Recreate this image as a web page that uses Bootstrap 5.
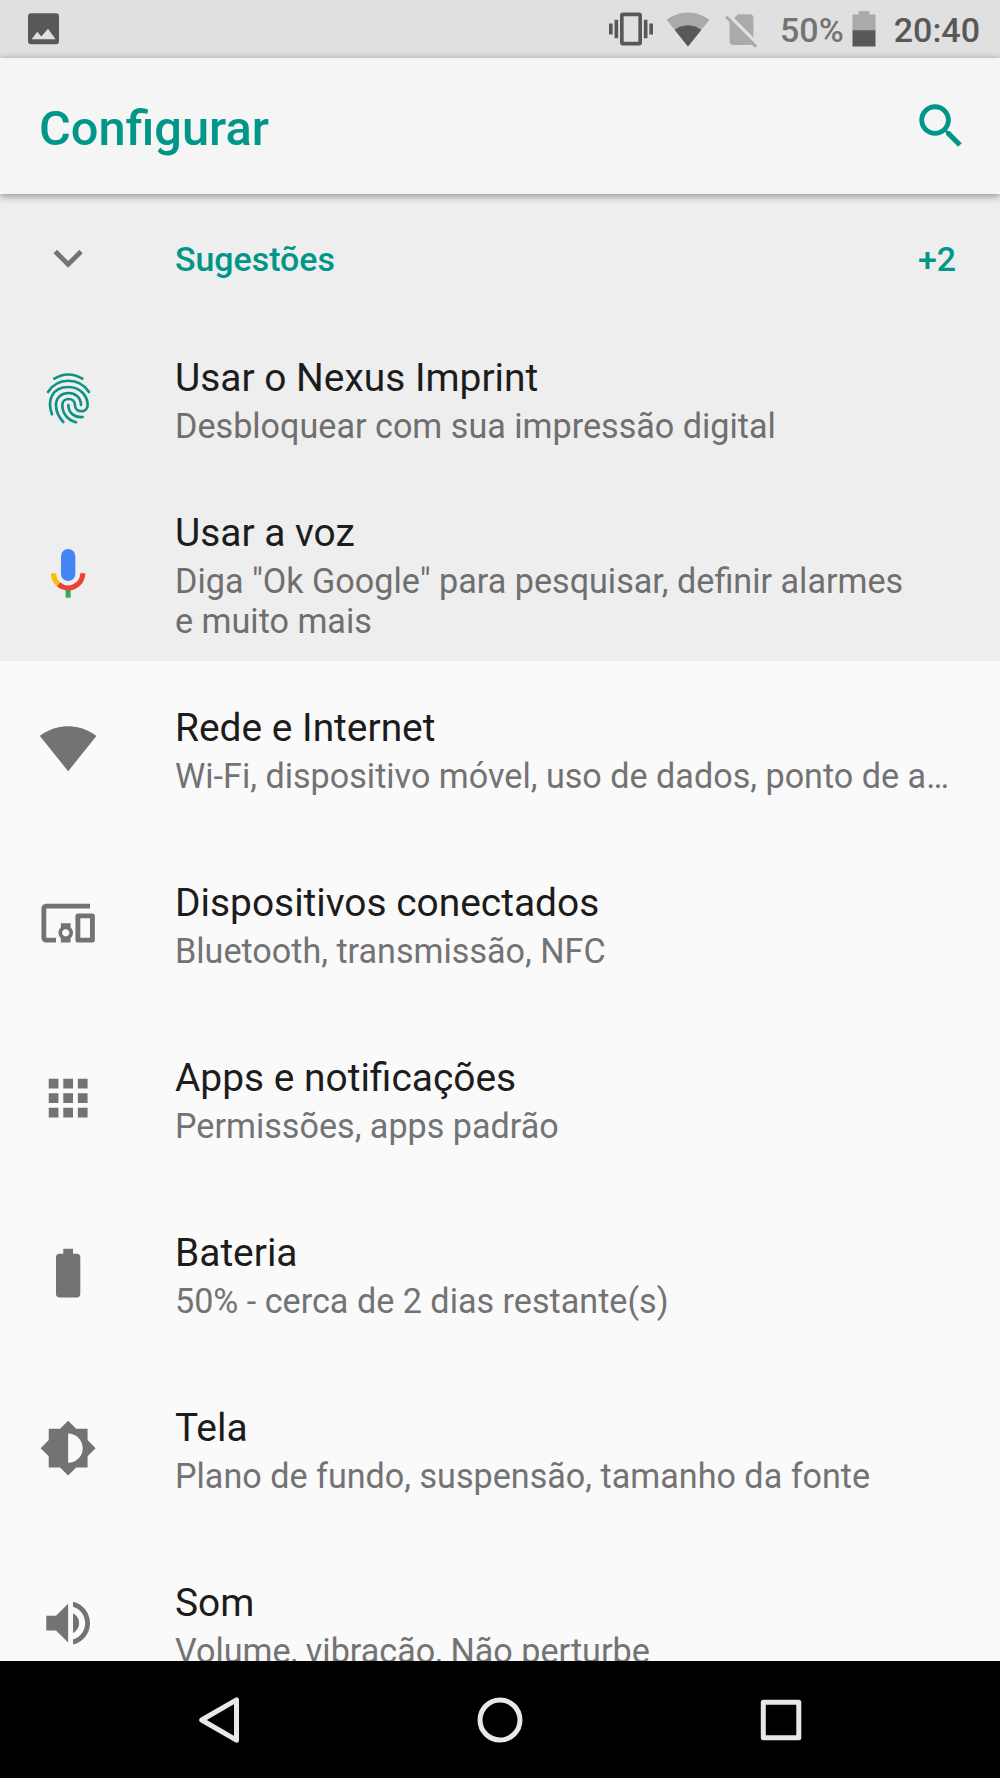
<!DOCTYPE html>
<html lang="pt-BR">
<head>
<meta charset="utf-8">
<meta name="viewport" content="width=device-width, initial-scale=1">
<title>Configurar</title>
<link rel="stylesheet" href="https://cdn.jsdelivr.net/npm/bootstrap@5.3.0/dist/css/bootstrap.min.css">
<style>
  :root { --teal: #009688; --ink: #1c1c1c; --dim: #737373; }
  body { font-family: Roboto, "Liberation Sans", sans-serif; background: #fafafa; color: var(--ink); }
  svg { display: block; flex: none; }
  .phone { width: 1000px; height: 1778px; }
  .statusbar { height: 58px; background: #e0e0e0; padding: 0 20px 0 28px; font-size: 34px; line-height: 40px; font-weight: 500; color: #585858; }
  .statusbar span { padding-top: 2px; }
  .statusbar .ico-vibrate { margin-right: 13px; }
  .statusbar .ico-sim { margin-left: 10.5px; }
  .statusbar .pct { color: #747474; margin: 0 8.5px 0 18.5px; }
  .statusbar .clock { margin-left: 17.5px; }
  .appbar { height: 136px; background: #f5f5f5; padding: 0 30px 0 39px; box-shadow: 0 2px 8px rgba(0,0,0,.42); z-index: 2; color: var(--teal); }
  .appbar h1 { font-size: 48.8px; line-height: 57px; font-weight: 500; padding-top: 4px; }
  .suggestions { background: #eee; padding-top: 11px; height: 467px; }
  .sug-head { height: 106px; font-size: 33.9px; line-height: 40px; font-weight: 500; color: var(--teal); padding: 0 44px 0 38.5px; }
  .sug-head span { padding-top: 3px; }
  .entry { height: 175px; padding: 0 44px 0 38.5px; }
  .glyph { width: 136.5px; color: var(--dim); flex: none; }
  .glyph svg { width: 58.3px; height: 58.3px; }
  .entry-title { font-size: 38.9px; line-height: 46px; padding: 5px 0 1px; }
  .entry-sub { font-size: 34.15px; line-height: 40px; padding: 4px 0 1px; color: var(--dim); }
  .suggestions .entry-sub { max-width: 740px; color: #6f6f6f; }
  .navkeys { height: 117px; background: #000; color: #e8e8e8; padding: 0 197px; }
</style>
<script src="https://cdn.jsdelivr.net/npm/bootstrap@5.3.0/dist/js/bootstrap.bundle.min.js"></script>
</head>
<body>
<div class="phone d-flex flex-column overflow-hidden">
  <div class="statusbar d-flex align-items-center flex-shrink-0">
    <svg width="31" height="32" viewBox="0 0 31 32"><rect y=".3" width="31" height="31" rx="3" fill="#585858"/><path d="M3.6 26.2l5.7-7.4 4 4.8L20 15.700l7.600 10.500z" fill="#e0e0e0"/></svg>
    <div class="d-flex align-items-center ms-auto">
      <svg class="ico-vibrate" width="44" height="44" viewBox="0 0 24 24" fill="currentColor"><path d="M0 15h2V9H0v6zm3 2h2V7H3v10zm19-8v6h2V9h-2zm-3 8h2V7h-2v10zM16.500 3h-9C6.670 3 6 3.670 6 4.500v15c0 .83.67 1.500 1.500 1.500h9c.83 0 1.500-.67 1.500-1.500v-15c0-.83-.67-1.500-1.500-1.500zM16 19H8V5h8v14z"/></svg>
      <svg width="44" height="44" viewBox="0 0 24 24"><path fill="#aaa" d="M12.010 21.490L23.640 7c-.45-.34-4.930-4-11.640-4C5.280 3 .81 6.660.36 7l11.630 14.490.01.01.01-.01z"/><path fill="#585858" d="M4.790 12.520l7.200 8.980H12l.01-.01 7.200-8.980C18.850 12.240 16.100 10 12 10s-6.850 2.240-7.210 2.520z"/></svg>
      <svg class="ico-sim" width="41" height="41" viewBox="0 0 24 24" fill="#aaa"><path d="M18.990 5c0-1.100-.89-2-1.990-2h-7L7.660 5.340 19 16.680 18.990 5zM3.650 3.880L2.380 5.150 5 7.770V19c0 1.100.9 2 2 2h10.010c.35 0 .67-.1.960-.26l1.880 1.880 1.270-1.270L3.650 3.880z"/></svg>
      <span class="pct">50%</span>
      <svg width="24" height="36" viewBox="0 0 24 36"><path fill="#aaa" d="M6.500 0h11v3.500H23.500V20H.5V3.500h6z"/><path fill="#585858" d="M.5 19.300h23V35.500H.5z"/></svg>
      <span class="clock">20:40</span>
    </div>
  </div>

  <header class="appbar d-flex align-items-center justify-content-between flex-shrink-0 position-relative">
    <h1 class="mb-0">Configurar</h1>
    <svg width="58.3" height="58.3" viewBox="0 0 24 24" fill="currentColor"><path d="M15.500 14h-.79l-.28-.27C15.410 12.590 16 11.110 16 9.500 16 5.910 13.090 3 9.500 3S3 5.910 3 9.500 5.910 16 9.500 16c1.610 0 3.090-.59 4.230-1.570l.27.28v.79l5 4.990L20.490 19l-4.990-5zm-6 0C7.010 14 5 11.990 5 9.500S7.010 5 9.500 5 14 7.010 14 9.500 11.990 14 9.500 14z"/></svg>
  </header>

  <main class="flex-grow-1 overflow-hidden">
    <section class="suggestions">
      <div class="sug-head d-flex align-items-center">
        <div class="glyph"><svg viewBox="0 0 24 24" fill="currentColor"><path d="M16.590 8.590L12 13.170 7.410 8.590 6 10l6 6 6-6z"/></svg></div>
        <span class="flex-grow-1">Sugestões</span><span>+2</span>
      </div>
      <div class="entry d-flex align-items-center">
        <div class="glyph"><svg viewBox="117 478 175 175" fill="none" stroke="#0d9384" stroke-width="8" stroke-linecap="round"><path d="M163 507Q205 482 247 507"/><path d="M144 547C172 502 238 502 267 547"/><path d="M156 614C140 572 157 532 205 532C242 532 263 560 263 586C263 611 225 611 225 586C225 562 187 562 187 586C187 612 204 632 228 638"/><path d="M190 637C174 620 168 606 168 586C168 538 243 538 243 586"/><path d="M205 586C205 610 225 625 248 622"/></svg></div>
        <div><div class="entry-title">Usar o Nexus Imprint</div><div class="entry-sub">Desbloquear com sua impressão digital</div></div>
      </div>
      <div class="entry d-flex align-items-center">
        <div class="glyph"><svg viewBox="0 0 58.3 58.3" fill="none" stroke-width="5.2"><rect x="22" y="5" width="14.300" height="32" rx="7.100" fill="#4285f4"/><path stroke="#34a853" stroke-width="5" d="M29.150 45.500V53.700"/><path stroke="#ea4335" d="M43.750 29.300a14.600 14.600 0 0 1-24.300 10.900"/><path stroke="#fbbc05" d="M14.550 29.300a14.600 14.600 0 0 0 4.900 10.900"/></svg></div>
        <div><div class="entry-title">Usar a voz</div><div class="entry-sub">Diga "Ok Google" para pesquisar, definir alarmes e muito mais</div></div>
      </div>
    </section>
    <section>
      <div class="entry d-flex align-items-center">
        <div class="glyph"><svg viewBox="0 0 24 24" fill="currentColor"><path d="M12.010 21.490L23.640 7c-.45-.34-4.930-4-11.640-4C5.280 3 .81 6.660.36 7l11.630 14.490.01.01.01-.01z"/></svg></div>
        <div class="overflow-hidden"><div class="entry-title">Rede e Internet</div><div class="entry-sub text-nowrap">Wi-Fi, dispositivo móvel, uso de dados, ponto de a…</div></div>
      </div>
      <div class="entry d-flex align-items-center">
        <div class="glyph"><svg viewBox="0 0 24 24" fill="currentColor"><path d="M3 6h18V4H3c-1.100 0-2 .9-2 2v12c0 1.100.9 2 2 2h4v-2H3V6zm10 6H9v1.780c-.61.55-1 1.330-1 2.220s.39 1.670 1 2.220V20h4v-1.780c.61-.55 1-1.340 1-2.220s-.39-1.670-1-2.220V12zm-2 5.500c-.83 0-1.500-.67-1.500-1.500s.67-1.500 1.500-1.500 1.500.67 1.500 1.500-.67 1.500-1.500 1.500zM22 8h-6c-.5 0-1 .5-1 1v10c0 .5.5 1 1 1h6c.5 0 1-.5 1-1V9c0-.5-.5-1-1-1zm-1 10h-4v-8h4v8z"/></svg></div>
        <div><div class="entry-title">Dispositivos conectados</div><div class="entry-sub">Bluetooth, transmissão, NFC</div></div>
      </div>
      <div class="entry d-flex align-items-center">
        <div class="glyph"><svg viewBox="0 0 24 24" fill="currentColor"><path d="M4 8h4V4H4v4zm6 12h4v-4h-4v4zm-6 0h4v-4H4v4zm0-6h4v-4H4v4zm6 0h4v-4h-4v4zm6-10v4h4V4h-4zm-6 4h4V4h-4v4zm6 6h4v-4h-4v4zm0 6h4v-4h-4v4z"/></svg></div>
        <div><div class="entry-title">Apps e notificações</div><div class="entry-sub">Permissões, apps padrão</div></div>
      </div>
      <div class="entry d-flex align-items-center">
        <div class="glyph"><svg viewBox="0 0 24 24" fill="currentColor"><path d="M15.670 4H14V2h-4v2H8.330C7.600 4 7 4.600 7 5.330v15.330C7 21.400 7.600 22 8.330 22h7.330c.74 0 1.340-.6 1.340-1.330V5.330C17 4.600 16.400 4 15.670 4z"/></svg></div>
        <div><div class="entry-title">Bateria</div><div class="entry-sub">50% - cerca de 2 dias restante(s)</div></div>
      </div>
      <div class="entry d-flex align-items-center">
        <div class="glyph"><svg viewBox="0 0 24 24" fill="currentColor"><path d="M20 15.310L23.310 12 20 8.690V4h-4.690L12 .69 8.690 4H4v4.690L.69 12 4 15.310V20h4.690L12 23.310 15.310 20H20v-4.690zM12 18V6c3.310 0 6 2.690 6 6s-2.690 6-6 6z"/></svg></div>
        <div><div class="entry-title">Tela</div><div class="entry-sub">Plano de fundo, suspensão, tamanho da fonte</div></div>
      </div>
      <div class="entry d-flex align-items-center">
        <div class="glyph"><svg viewBox="0 0 24 24" fill="currentColor"><path d="M3 9v6h4l5 5V4L7 9H3zm13.500 3c0-1.770-1.020-3.290-2.500-4.030v8.050c1.480-.73 2.500-2.250 2.500-4.020zM14 3.230v2.060c2.890.86 5 3.540 5 6.710s-2.110 5.850-5 6.710v2.060c4.010-.91 7-4.490 7-8.770s-2.990-7.860-7-8.770z"/></svg></div>
        <div><div class="entry-title">Som</div><div class="entry-sub">Volume, vibração, Não perturbe</div></div>
      </div>
    </section>
  </main>

  <nav class="navkeys d-flex align-items-center justify-content-between flex-shrink-0">
    <svg width="46" height="46" viewBox="0 0 46 46" fill="none" stroke="currentColor" stroke-width="5" stroke-linejoin="round"><path d="M39.500 2.800V43.200L4.700 23z"/></svg>
    <svg width="46" height="46" viewBox="0 0 46 46" fill="none" stroke="currentColor" stroke-width="5"><circle cx="23" cy="23" r="20"/></svg>
    <svg width="46" height="46" viewBox="0 0 46 46" fill="none" stroke="currentColor" stroke-width="5" stroke-linejoin="round"><path d="M6.300 5.200h35.500v35.500H6.300z"/></svg>
  </nav>
</div>
</body>
</html>
